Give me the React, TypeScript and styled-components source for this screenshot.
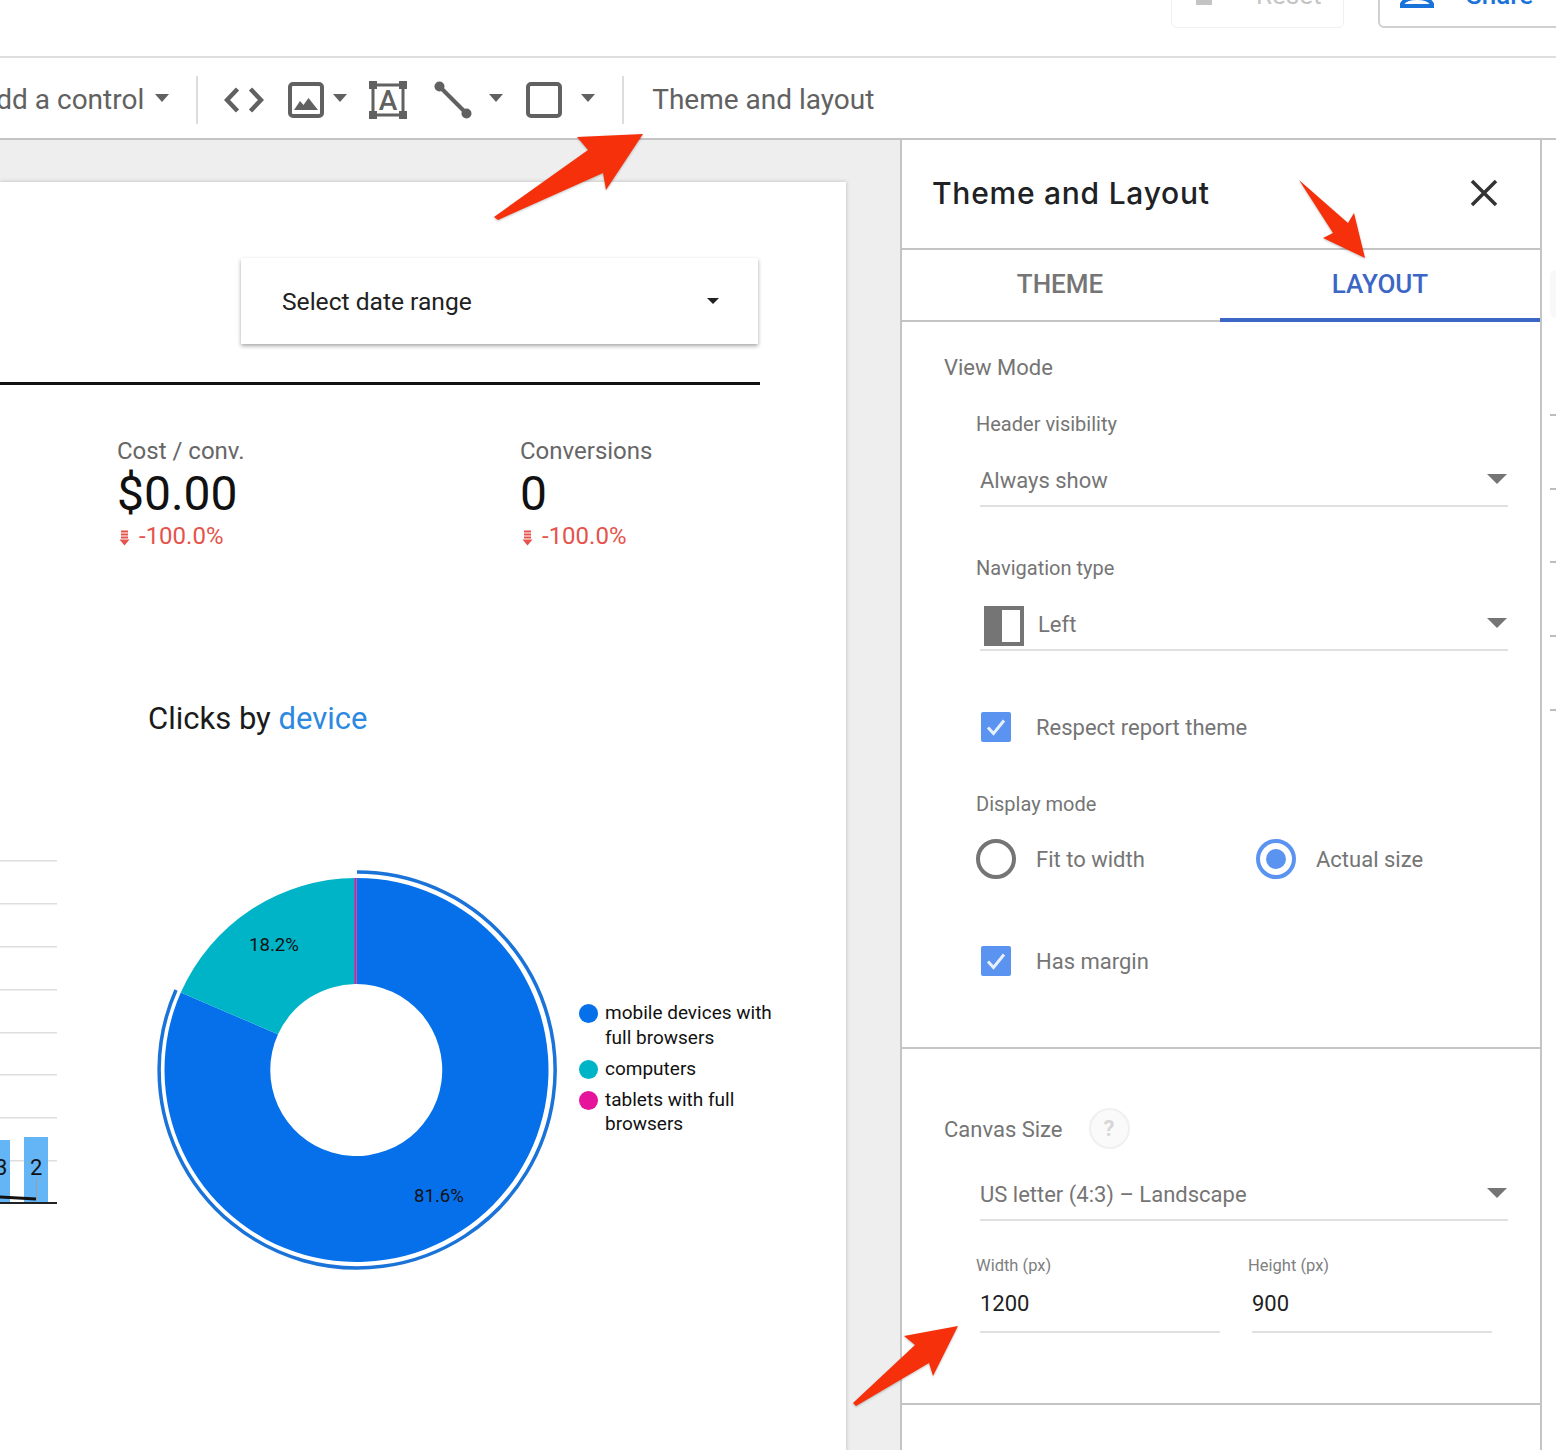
import React from "react";
import styled, { createGlobalStyle } from "styled-components";

const Global = createGlobalStyle`
  html, body { margin: 0; padding: 0; background: #fff; }
  body { font-family: Roboto, "Liberation Sans", sans-serif; }
`;

const Screen = styled.div`
  position: relative;
  width: 1556px;
  height: 1450px;
  overflow: hidden;
  background: #fff;
`;

const TopBar = styled.header`
  height: 28px;
  display: flex;
  justify-content: flex-end;
  align-items: flex-end;
  border-bottom: 2px solid #dedede;
  padding-bottom: 28px;
  box-sizing: content-box;
`;

const ResetButton = styled.div`
  width: 173px;
  height: 44px;
  flex: none;
  display: flex;
  align-items: center;
  justify-content: center;
  gap: 14px;
  padding-bottom: 22px;
  border: 1px solid #f0f0f0;
  border-radius: 6px;
  box-sizing: border-box;
  color: #c4c4c4;
  font-size: 26px;
`;

const ShareButton = styled.div`
  width: 190px;
  height: 44px;
  margin-left: 34px;
  margin-right: -12px;
  flex: none;
  display: flex;
  align-items: center;
  padding-left: 20px;
  padding-bottom: 22px;
  gap: 32px;
  border: 2px solid #d0d0d0;
  border-radius: 6px;
  box-sizing: border-box;
  color: #1a73d9;
  font-size: 26px;
  font-weight: 500;
`;

const PersonIcon = styled.svg`
  flex: none;
  margin-top: 22px;
`;

const Toolbar = styled.nav`
  height: 82px;
  box-sizing: border-box;
  padding-top: 4px;
  display: flex;
  align-items: center;
  border-bottom: 2px solid #c4c4c4;
  color: #616161;
`;

const ToolText = styled.span<{ $lead?: number }>`
  font-size: 28px;
  line-height: 32px;
  color: #616161;
  white-space: nowrap;
  margin-left: ${(p) => p.$lead ?? 0}px;
`;

const Caret = styled.span<{ $w?: number; $lead?: number; $color?: string }>`
  flex: none;
  width: 0;
  height: 0;
  margin-left: ${(p) => p.$lead ?? 0}px;
  border-left: ${(p) => (p.$w ?? 15) / 2}px solid transparent;
  border-right: ${(p) => (p.$w ?? 15) / 2}px solid transparent;
  border-top: ${(p) => ((p.$w ?? 15) * 8) / 15}px solid ${(p) => p.$color ?? "#616161"};
`;

const ToolCaret = styled(Caret)`
  margin-top: -5px;
`;

const ToolSeparator = styled.span<{ $lead: number }>`
  flex: none;
  width: 2px;
  height: 48px;
  background: #dcdcdc;
  margin-left: ${(p) => p.$lead}px;
`;

const ToolIcon = styled.svg<{ $lead: number }>`
  flex: none;
  margin-left: ${(p) => p.$lead}px;
`;

const Main = styled.main`
  display: flex;
  height: 1310px;
`;

const Canvas = styled.section`
  width: 900px;
  flex: none;
  background: #eeeeee;
  padding-top: 42px;
  box-sizing: border-box;
  overflow: hidden;
`;

const ReportPage = styled.div`
  width: 846px;
  height: 1300px;
  background: #fff;
  box-shadow: 0 0 4px rgba(0, 0, 0, 0.22);
  overflow: hidden;
`;

const DateCard = styled.div`
  width: 517px;
  height: 86px;
  margin: 76px 0 0 241px;
  padding: 0 39px 0 41px;
  box-sizing: border-box;
  display: flex;
  align-items: center;
  justify-content: space-between;
  box-shadow: 0 2px 4px rgba(0, 0, 0, 0.35);
  font-size: 24.6px;
  color: #212121;
`;

const HeavyRule = styled.div`
  width: 760px;
  height: 3px;
  margin-top: 38px;
  background: #111;
`;

const Metrics = styled.div`
  display: flex;
  margin-top: 52px;
  padding-left: 117px;
`;

const Metric = styled.div`
  flex: none;
  width: 403px;
`;

const MetricLabel = styled.div`
  font-size: 24px;
  line-height: 28px;
  color: #666;
`;

const MetricValue = styled.div`
  font-size: 48px;
  line-height: 58px;
  color: #111;
`;

const MetricDelta = styled.div`
  display: flex;
  align-items: center;
  gap: 9px;
  padding-left: 2px;
  margin-top: -1px;
  height: 28px;
  font-size: 24px;
  color: #e5534b;
`;

const DeltaMark = styled.svg`
  flex: none;
  margin-top: 3px;
`;

const ChartTitle = styled.h2`
  margin: 151px 0 0 148px;
  font-size: 31px;
  line-height: 36px;
  font-weight: 400;
  color: #1b1b1b;
`;

const TitleLink = styled.span`
  color: #2d88e0;
`;

const ChartRow = styled.div`
  display: flex;
  margin-top: 123px;
`;

const BarFragment = styled.svg`
  flex: none;
`;

const Donut = styled.svg`
  flex: none;
  margin: 10px 0 0 100px;
`;

const Legend = styled.ul`
  list-style: none;
  margin: 141px 0 0 22px;
  padding: 0;
  display: flex;
  flex-direction: column;
  gap: 6.5px;
`;

const LegendItem = styled.li`
  display: flex;
  gap: 7px;
  width: 202px;
  font-size: 19px;
  line-height: 24.5px;
  color: #111;
`;

const LegendDot = styled.span<{ $color: string }>`
  flex: none;
  width: 19px;
  height: 19px;
  margin-top: 3px;
  border-radius: 50%;
  background: ${(p) => p.$color};
`;

const Panel = styled.aside`
  width: 642px;
  flex: none;
  box-sizing: border-box;
  border-left: 2px solid #c4c4c4;
  border-right: 2px solid #c4c4c4;
`;

const PanelHeader = styled.div`
  height: 110px;
  box-sizing: border-box;
  display: flex;
  align-items: center;
  justify-content: space-between;
  padding: 0 42px 2px 30px;
  border-bottom: 2px solid #c4c4c4;
`;

const PanelTitle = styled.h1`
  margin: 0;
  font-family: Inter, "Open Sans", sans-serif;
  font-size: 30px;
  font-weight: 500;
  letter-spacing: 0.75px;
  color: #202124;
`;

const Tabs = styled.div`
  display: flex;
  height: 72px;
  border-bottom: 2px solid #c4c4c4;
  box-sizing: border-box;
`;

const Tab = styled.div<{ $active?: boolean }>`
  flex: ${(p) => (p.$active ? "1" : "0 0 318px")};
  box-sizing: border-box;
  padding-right: ${(p) => (p.$active ? 0 : 2)}px;
  display: flex;
  align-items: center;
  justify-content: center;
  font-size: 26px;
  font-weight: 500;
  color: ${(p) => (p.$active ? "#3b66c4" : "#757575")};
  margin-bottom: -2px;
  border-bottom: 4px solid ${(p) => (p.$active ? "#3b66c4" : "transparent")};
`;

const PanelSection = styled.div<{ $h: number }>`
  display: flow-root;
  height: ${(p) => p.$h}px;
  box-sizing: border-box;
  padding-left: 42px;
  border-bottom: 2px solid #c4c4c4;
`;

const SectionTitle = styled.div<{ $top: number }>`
  display: flex;
  align-items: center;
  gap: 26px;
  margin-top: ${(p) => p.$top}px;
  height: 28px;
  font-size: 22px;
  color: #757575;
`;

const FieldLabel = styled.div<{ $top: number }>`
  margin: ${(p) => p.$top}px 0 0 32px;
  height: 24px;
  line-height: 24px;
  font-size: 20px;
  color: #757575;
`;

const Select = styled.div<{ $top: number }>`
  margin: ${(p) => p.$top}px 0 0 36px;
  width: 528px;
  height: 46px;
  box-sizing: border-box;
  display: flex;
  align-items: center;
  gap: 14px;
  border-bottom: 2px solid #e0e0e0;
  font-size: 22px;
  color: #757575;
  padding: 0 0 6px 0;
`;

const SelectText = styled.span`
  flex: 1;
`;

const SelectCaret = styled(Caret)`
  margin: -2px 1px 0 0;
`;

const NavIcon = styled.span`
  flex: none;
  margin: 2px 0 -2px 4px;
  width: 40px;
  height: 40px;
  box-sizing: border-box;
  border: 4px solid #757575;
  border-left-width: 18px;
  background: #fff;
`;

const CheckRow = styled.div<{ $top: number }>`
  display: flex;
  align-items: center;
  gap: 25px;
  height: 30px;
  margin: ${(p) => p.$top}px 0 0 37px;
  font-size: 22px;
  color: #757575;
`;

const CheckBox = styled.span`
  flex: none;
  width: 30px;
  height: 30px;
  border-radius: 2px;
  background: #5b93f0;
  display: flex;
  align-items: center;
  justify-content: center;
`;

const RadioGroup = styled.div`
  display: flex;
  margin: 23px 0 0 32px;
`;

const RadioOption = styled.div`
  width: 280px;
  display: flex;
  align-items: center;
  gap: 20px;
  font-size: 22px;
  color: #757575;
`;

const Radio = styled.span<{ $on?: boolean }>`
  flex: none;
  width: 40px;
  height: 40px;
  box-sizing: border-box;
  border-radius: 50%;
  border: 4px solid ${(p) => (p.$on ? "#5b93f0" : "#757575")};
  display: flex;
  align-items: center;
  justify-content: center;
  &::after {
    content: "";
    display: ${(p) => (p.$on ? "block" : "none")};
    width: 20px;
    height: 20px;
    border-radius: 50%;
    background: #5b93f0;
  }
`;

const HelpBadge = styled.span`
  width: 41px;
  height: 41px;
  margin-top: -2px;
  box-sizing: border-box;
  border: 2px solid #f0f0f0;
  border-radius: 50%;
  background: #fafafa;
  color: #d6d6d6;
  font-size: 22px;
  font-weight: 700;
  display: flex;
  align-items: center;
  justify-content: center;
`;

const SizeRow = styled.div`
  display: flex;
  gap: 32px;
  margin: 34px 0 0 32px;
`;

const SizeField = styled.div`
  width: 240px;
`;

const SizeLabel = styled.div`
  font-size: 16.5px;
  line-height: 22px;
  color: #808080;
`;

const SizeValue = styled.div`
  margin: 13px 0 0 4px;
  height: 41px;
  width: 240px;
  line-height: 28px;
  font-size: 22px;
  color: #212121;
  border-bottom: 2px solid #e0e0e0;
`;

const SideStrip = styled.div`
  flex: 1;
  display: flex;
  flex-direction: column;
  align-items: flex-end;
  padding-top: 130px;
  gap: 71.75px;
`;

const StripHandle = styled.span`
  width: 6px;
  height: 48px;
  margin-bottom: 24px;
  background: #f8f8f8;
  border-radius: 8px 0 0 8px;
`;

const StripTick = styled.span`
  width: 6px;
  height: 2px;
  background: #bdbdbd;
`;

const Arrow = styled.svg`
  position: absolute;
  left: 0;
  top: 0;
  pointer-events: none;
  filter: drop-shadow(0 1px 1px rgba(0, 0, 0, 0.25));
`;

function DownMark() {
  return (
    <DeltaMark width="11" height="16" viewBox="0 0 11 16">
      <path d="M2 0.5h7v2H2zM2 3.5h7v2H2zM2 6.5h7v2H2z" fill="#e5534b" />
      <path d="M0.5 9.5h10L5.5 15.5z" fill="#e5534b" />
    </DeltaMark>
  );
}

function Check() {
  return (
    <svg width="22" height="22" viewBox="0 0 22 22" fill="none">
      <path d="M3 11.5l5.5 6L19 4.5" stroke="#e8f0fe" strokeWidth="3" />
    </svg>
  );
}

export default function App() {
  return (
    <Screen>
      <Global />
      <TopBar>
        <ResetButton>
          <svg width="20" height="20" viewBox="0 0 20 20">
            <path d="M2 10h16v10H2z" fill="#c4c4c4" />
          </svg>
          <span>↶ Reset</span>
        </ResetButton>
        <ShareButton>
          <PersonIcon width="34" height="20" viewBox="0 0 34 20" fill="none">
            <path d="M2 8c2-4 8-6 15-6s13 2 15 6v2H2z" stroke="#1a73d9" strokeWidth="4" />
          </PersonIcon>
          <span>Share</span>
        </ShareButton>
      </TopBar>
      <Toolbar>
        <ToolText $lead={-22}>Add a control</ToolText>
        <ToolCaret $lead={11} />
        <ToolSeparator $lead={27} />
        <ToolIcon $lead={26} width="40" height="30" viewBox="0 0 40 30" fill="none" stroke="#616161" strokeWidth="4.5">
          <path d="M13.5 4L3 15l10.5 11M26.5 4L37 15 26.5 26" />
        </ToolIcon>
        <ToolIcon $lead={24} width="36" height="36" viewBox="0 0 36 36" fill="none">
          <rect x="2" y="2" width="32" height="32" rx="3" stroke="#616161" strokeWidth="4" />
          <path d="M6 28l6-9 3.5 4 5-7 9.5 12z" fill="#616161" />
        </ToolIcon>
        <ToolCaret $lead={9} />
        <ToolIcon $lead={22} width="38" height="38" viewBox="0 0 38 38" fill="none">
          <rect x="4" y="4" width="30" height="30" stroke="#616161" strokeWidth="3" />
          <path d="M0 0h8v8H0zM30 0h8v8h-8zM0 30h8v8H0zM30 30h8v8h-8z" fill="#616161" />
          <text x="19" y="29" textAnchor="middle" fontFamily="Roboto" fontSize="28" fontWeight="500" fill="#616161">A</text>
        </ToolIcon>
        <ToolIcon $lead={27} width="38" height="38" viewBox="0 0 38 38" fill="none">
          <path d="M5 5l28 28" stroke="#616161" strokeWidth="4" />
          <circle cx="5.5" cy="5.5" r="5" fill="#616161" />
          <circle cx="32.5" cy="32.5" r="5" fill="#616161" />
        </ToolIcon>
        <ToolCaret $lead={17} />
        <ToolIcon $lead={23} width="36" height="36" viewBox="0 0 36 36" fill="none">
          <rect x="2" y="2" width="32" height="32" rx="3" stroke="#616161" strokeWidth="4" />
        </ToolIcon>
        <ToolCaret $lead={19} />
        <ToolSeparator $lead={27} />
        <ToolText $lead={28}>Theme and layout</ToolText>
      </Toolbar>
      <Main>
        <Canvas>
          <ReportPage>
            <DateCard>
              <span>Select date range</span>
              <Caret $w={12} $color="#212121" />
            </DateCard>
            <HeavyRule />
            <Metrics>
              <Metric>
                <MetricLabel>Cost / conv.</MetricLabel>
                <MetricValue>$0.00</MetricValue>
                <MetricDelta>
                  <DownMark />
                  <span>-100.0%</span>
                </MetricDelta>
              </Metric>
              <Metric>
                <MetricLabel>Conversions</MetricLabel>
                <MetricValue>0</MetricValue>
                <MetricDelta>
                  <DownMark />
                  <span>-100.0%</span>
                </MetricDelta>
              </Metric>
            </Metrics>
            <ChartTitle>
              Clicks by <TitleLink>device</TitleLink>
            </ChartTitle>
            <ChartRow>
              <BarFragment width="57" height="350" viewBox="0 0 57 350">
                {[0, 43, 86, 129, 172, 214, 257, 300].map((y) => (
                  <rect key={y} x="0" y={y} width="57" height="1.5" fill="#dedede" />
                ))}
                <rect x="-2" y="280" width="12" height="62" fill="#64b5f6" />
                <rect x="24" y="277" width="24" height="65" fill="#64b5f6" />
                <path d="M0 337l36 2" stroke="#111" strokeWidth="3" />
                <path d="M36.5 318v22" stroke="#9e9e9e" strokeWidth="1" />
                <rect x="0" y="342" width="57" height="2" fill="#222" />
                <text x="-5" y="315" fontSize="22" fill="#111" fontFamily="Roboto">3</text>
                <text x="30" y="315" fontSize="22" fill="#111" fontFamily="Roboto">2</text>
              </BarFragment>
              <Donut width="400" height="400" viewBox="0 0 400 400">
                <path
                  d="M199.5 8A192 192 0 1 1 23.8 122.6L121 164.3A86 86 0 1 0 199.5 114Z"
                  fill="#0570ea"
                />
                <path
                  d="M198.5 8A192 192 0 0 0 23.8 122.6L121 164.3A86 86 0 0 1 198.5 114Z"
                  fill="#00b4c8"
                />
                <rect x="197.6" y="8" width="2" height="106" fill="#e6149b" />
                <path
                  d="M200 2A198 198 0 1 1 19 120"
                  fill="none"
                  stroke="#1a73d9"
                  strokeWidth="3.5"
                />
                <text x="92" y="81" fontSize="18.6" fill="#111" fontFamily="Roboto">18.2%</text>
                <text x="257" y="332" fontSize="18.6" fill="#111" fontFamily="Roboto">81.6%</text>
              </Donut>
              <Legend>
                <LegendItem>
                  <LegendDot $color="#0570ea" />
                  <span>mobile devices with full browsers</span>
                </LegendItem>
                <LegendItem>
                  <LegendDot $color="#00b4c8" />
                  <span>computers</span>
                </LegendItem>
                <LegendItem>
                  <LegendDot $color="#e6149b" />
                  <span>tablets with full browsers</span>
                </LegendItem>
              </Legend>
            </ChartRow>
          </ReportPage>
        </Canvas>
        <Panel>
          <PanelHeader>
            <PanelTitle>Theme and Layout</PanelTitle>
            <svg width="28" height="28" viewBox="0 0 28 28" fill="none">
              <path d="M2 2l24 24M26 2L2 26" stroke="#333" strokeWidth="3.5" />
            </svg>
          </PanelHeader>
          <Tabs>
            <Tab>THEME</Tab>
            <Tab $active>LAYOUT</Tab>
          </Tabs>
          <PanelSection $h={727}>
            <SectionTitle $top={31}>View Mode</SectionTitle>
            <FieldLabel $top={31}>Header visibility</FieldLabel>
            <Select $top={25}>
              <SelectText>Always show</SelectText>
              <SelectCaret $w={20} $color="#757575" />
            </Select>
            <FieldLabel $top={49}>Navigation type</FieldLabel>
            <Select $top={25}>
              <NavIcon />
              <SelectText>Left</SelectText>
              <SelectCaret $w={20} $color="#757575" />
            </Select>
            <CheckRow $top={61}>
              <CheckBox><Check /></CheckBox>
              <span>Respect report theme</span>
            </CheckRow>
            <FieldLabel $top={50}>Display mode</FieldLabel>
            <RadioGroup>
              <RadioOption>
                <Radio />
                <span>Fit to width</span>
              </RadioOption>
              <RadioOption>
                <Radio $on />
                <span>Actual size</span>
              </RadioOption>
            </RadioGroup>
            <CheckRow $top={67}>
              <CheckBox><Check /></CheckBox>
              <span>Has margin</span>
            </CheckRow>
          </PanelSection>
          <PanelSection $h={356}>
            <SectionTitle $top={66}>
              Canvas Size
              <HelpBadge>?</HelpBadge>
            </SectionTitle>
            <Select $top={32}>
              <SelectText>US letter (4:3) – Landscape</SelectText>
              <SelectCaret $w={20} $color="#757575" />
            </Select>
            <SizeRow>
              <SizeField>
                <SizeLabel>Width (px)</SizeLabel>
                <SizeValue>1200</SizeValue>
              </SizeField>
              <SizeField>
                <SizeLabel>Height (px)</SizeLabel>
                <SizeValue>900</SizeValue>
              </SizeField>
            </SizeRow>
          </PanelSection>
        </Panel>
        <SideStrip>
          <StripHandle />
          <StripTick />
          <StripTick />
          <StripTick />
          <StripTick />
          <StripTick />
        </SideStrip>
      </Main>
      <Arrow width="1556" height="1450" viewBox="0 0 1556 1450">
        <path d="M494 217L588 150 577 137 643 134 606 190 603 173 498 220Z" fill="#f5300a" />
        <path d="M1299 180L1348 223 1354 213 1365 258 1323 238 1333 233Z" fill="#f5300a" />
        <path d="M853 1403L915 1345 904 1336 958 1326 933 1376 929 1363 856 1406Z" fill="#f5300a" />
      </Arrow>
    </Screen>
  );
}
